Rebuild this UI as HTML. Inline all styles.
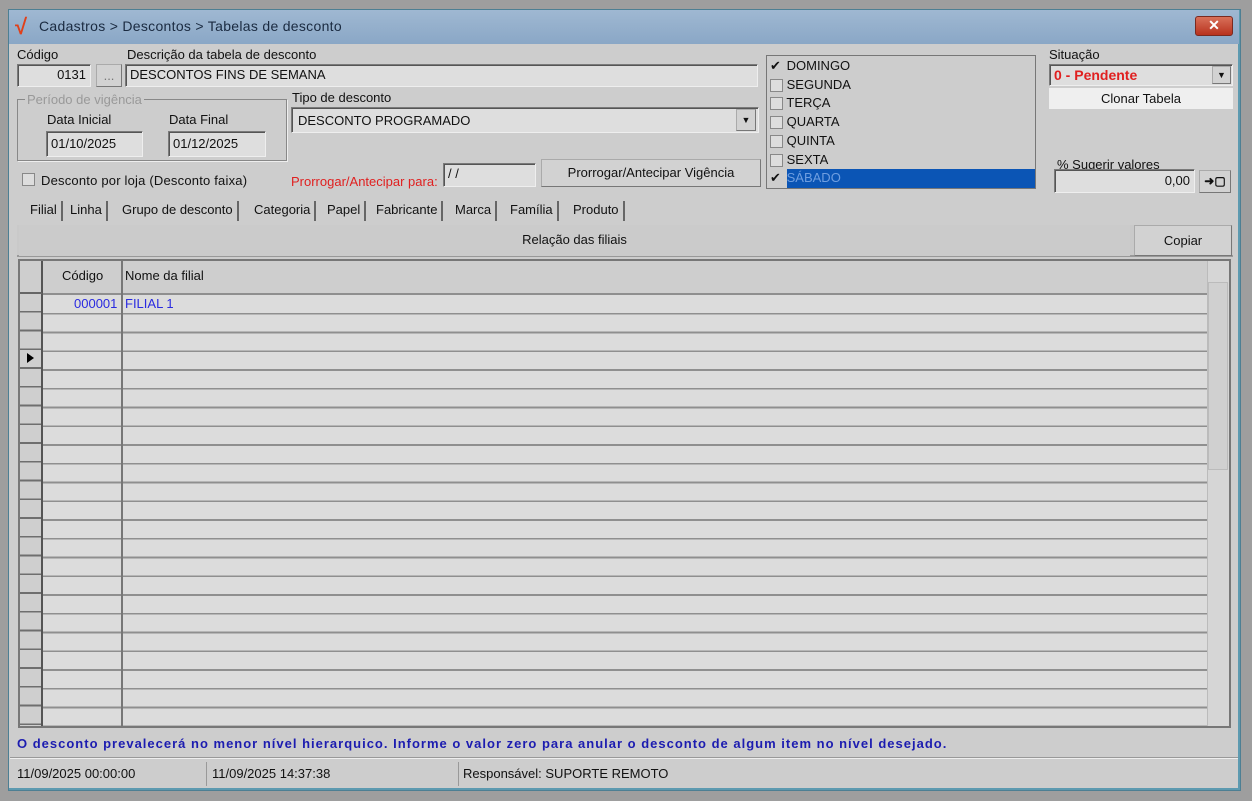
<!DOCTYPE html>
<html><head><meta charset="utf-8"><style>
*{box-sizing:border-box;margin:0;padding:0}
body{width:1252px;height:801px;background:#9e9e9e;font-family:"Liberation Sans",sans-serif;font-size:13px;color:#111;position:relative;overflow:hidden}
.a{position:absolute}
.win{left:8px;top:9px;width:1233px;height:782px;background:#cdcdcd;border:1px solid #4d7f93;box-shadow:inset -2px -2px 0 #5d9ab0}
.title{left:9px;top:10px;width:1230px;height:34px;background:linear-gradient(#9fb8d2,#8aa7c6);color:#1a2a40;font-size:14px}
.inp{background:#dedede;border:1px solid #7a7a7a;border-right-color:#eee;border-bottom-color:#eee;box-shadow:inset 1px 1px 0 #555;font-size:13px;padding:2px 4px;white-space:nowrap}
.lbl{font-size:13px;white-space:nowrap}
.btn{background:#d2d2d2;border:1px solid #aaa;border-right-color:#777;border-bottom-color:#777;text-align:center;font-size:13px}
.cb{width:13px;height:13px;border:1px solid #888;background:#ddd}
.tab{font-size:13px;top:201px;padding:0 4px;border-right:2px solid #666;height:20px;line-height:18px}
</style></head><body>
<div class="a win"></div>
<div class="a title">
  <span class="a" style="left:6px;top:4px;color:#e0401a;font-size:22px;font-weight:bold">√</span>
  <span class="a" style="left:30px;top:8px;letter-spacing:0.3px">Cadastros &gt; Descontos &gt; Tabelas de desconto</span>
  <div class="a" style="left:1186px;top:6px;width:38px;height:20px;background:linear-gradient(#d8705a,#b8321e);border:1px solid #7a2a20;border-radius:3px;color:#fff;text-align:center;font-weight:bold;line-height:17px">✕</div>
</div>

<div class="a lbl" style="left:17px;top:47px">Código</div>
<div class="a inp" style="left:17px;top:64px;width:74px;height:23px;text-align:right">0131</div>
<div class="a btn" style="left:96px;top:64px;width:26px;height:23px;color:#777;line-height:22px">...</div>
<div class="a lbl" style="left:127px;top:47px">Descrição da tabela de desconto</div>
<div class="a inp" style="left:125px;top:64px;width:633px;height:23px">DESCONTOS FINS DE SEMANA</div>

<div class="a" style="left:17px;top:99px;width:270px;height:62px;border:1px solid #888;box-shadow:1px 1px 0 #eee"></div>
<div class="a lbl" style="left:25px;top:92px;color:#999;background:#cdcdcd;padding:0 2px">Período de vigência</div>
<div class="a lbl" style="left:47px;top:112px">Data Inicial</div>
<div class="a inp" style="left:46px;top:131px;width:97px;height:26px;padding-top:4px">01/10/2025</div>
<div class="a lbl" style="left:169px;top:112px">Data Final</div>
<div class="a inp" style="left:168px;top:131px;width:98px;height:26px;padding-top:4px">01/12/2025</div>

<div class="a lbl" style="left:292px;top:90px">Tipo de desconto</div>
<div class="a inp" style="left:291px;top:107px;width:468px;height:26px;padding-top:5px;padding-left:6px">DESCONTO PROGRAMADO</div>
<div class="a btn" style="left:736px;top:109px;width:20px;height:22px;font-size:9px;line-height:20px">▼</div>

<div class="a cb" style="left:22px;top:173px"></div>
<div class="a lbl" style="left:41px;top:173px;letter-spacing:0.2px">Desconto por loja (Desconto faixa)</div>
<div class="a lbl" style="left:291px;top:174px;color:#e02020">Prorrogar/Antecipar para:</div>
<div class="a inp" style="left:443px;top:163px;width:93px;height:24px">/ /</div>
<div class="a btn" style="left:541px;top:159px;width:220px;height:28px;line-height:26px">Prorrogar/Antecipar Vigência</div>

<div class="a" style="left:766px;top:55px;width:270px;height:134px;border:1px solid #777;background:#cdcdcd"></div>
<div class="a" style="left:787px;top:169px;width:248px;height:19px;background:#0b55b5"></div>
<div class="a" style="left:770px;top:57px;line-height:18.7px;font-size:13px">
<div><span style="display:inline-block;width:13px">✔</span> DOMINGO</div>
<div><span class="cb" style="display:inline-block;vertical-align:middle"></span> SEGUNDA</div>
<div><span class="cb" style="display:inline-block;vertical-align:middle"></span> TERÇA</div>
<div><span class="cb" style="display:inline-block;vertical-align:middle"></span> QUARTA</div>
<div><span class="cb" style="display:inline-block;vertical-align:middle"></span> QUINTA</div>
<div><span class="cb" style="display:inline-block;vertical-align:middle"></span> SEXTA</div>
<div><span style="display:inline-block;width:13px">✔</span> <span style="color:#6f9ee0">SÁBADO</span></div>
</div>

<div class="a lbl" style="left:1049px;top:47px">Situação</div>
<div class="a inp" style="left:1049px;top:64px;width:184px;height:22px;color:#e02020;font-weight:bold;font-size:14px;padding-top:2px">0 - Pendente</div>
<div class="a btn" style="left:1212px;top:66px;width:19px;height:18px;font-size:9px;line-height:17px">▼</div>
<div class="a" style="left:1049px;top:88px;width:184px;height:21px;background:#efefef;text-align:center;line-height:21px">Clonar Tabela</div>
<div class="a lbl" style="left:1057px;top:157px">% Sugerir valores</div>
<div class="a inp" style="left:1054px;top:169px;width:141px;height:24px;text-align:right;padding-top:3px">0,00</div>
<div class="a btn" style="left:1199px;top:170px;width:32px;height:23px;font-size:12px;line-height:21px;font-weight:bold">➜▢</div>

<div class="a tab" style="left:26px">Filial</div>
<div class="a tab" style="left:66px">Linha</div>
<div class="a tab" style="left:118px">Grupo de desconto</div>
<div class="a tab" style="left:250px">Categoria</div>
<div class="a tab" style="left:323px">Papel</div>
<div class="a tab" style="left:372px">Fabricante</div>
<div class="a tab" style="left:451px">Marca</div>
<div class="a tab" style="left:506px">Família</div>
<div class="a tab" style="left:569px">Produto</div>

<div class="a" style="left:17px;top:225px;width:1216px;height:32px;background:#c9c9c9;border-bottom:2px solid #999"></div>
<div class="a btn" style="left:19px;top:225px;width:1111px;height:31px;line-height:30px;border:none;background:#cbcbcb">Relação das filiais</div>
<div class="a btn" style="left:1134px;top:225px;width:98px;height:31px;line-height:30px">Copiar</div>

<div class="a" style="left:18px;top:259px;width:1213px;height:469px;border:2px solid #777;background:repeating-linear-gradient(to bottom,#dcdcdc 0 16.8px,#8f8f8f 16.8px 18.75px);background-position:0 35px"></div>
<div class="a" style="left:20px;top:261px;width:1187px;height:34px;background:#cecece;border-bottom:2px solid #8f8f8f"></div>
<div class="a" style="left:20px;top:261px;width:23px;height:465px;background:repeating-linear-gradient(to bottom,#cfcfcf 0 16.8px,#6f6f6f 16.8px 18.75px);background-position:0 33px;border-right:2px solid #555"></div>
<div class="a" style="left:20px;top:261px;width:23px;height:33px;background:#cecece;border-right:2px solid #555;border-bottom:2px solid #666"></div>
<div class="a" style="left:121px;top:261px;width:2px;height:465px;background:#777"></div>
<div class="a lbl" style="left:62px;top:268px">Código</div>
<div class="a lbl" style="left:125px;top:268px">Nome da filial</div>
<div class="a lbl" style="left:74px;top:296px;color:#2a2ae0">000001</div>
<div class="a lbl" style="left:125px;top:296px;color:#2a2ae0">FILIAL 1</div>
<div class="a" style="left:27px;top:353px;width:0;height:0;border-left:7px solid #000;border-top:5px solid transparent;border-bottom:5px solid transparent"></div>
<div class="a" style="left:1207px;top:261px;width:22px;height:465px;background:#d6d6d6;border-left:1px solid #bbb"></div>
<div class="a" style="left:1208px;top:282px;width:20px;height:188px;background:#d0d0d0;border:1px solid #bbb"></div>

<div class="a" style="left:17px;top:736px;font-size:13px;font-weight:bold;color:#1c1cb0;white-space:nowrap;letter-spacing:1px">O desconto prevalecerá no menor nível hierarquico. Informe o valor zero para anular o desconto de algum item no nível desejado.</div>
<div class="a" style="left:10px;top:757px;width:1228px;height:2px;background:#999;border-bottom:1px solid #eee"></div>
<div class="a lbl" style="left:17px;top:766px">11/09/2025 00:00:00</div>
<div class="a" style="left:206px;top:762px;width:1px;height:24px;background:#999"></div>
<div class="a lbl" style="left:212px;top:766px">11/09/2025 14:37:38</div>
<div class="a" style="left:458px;top:762px;width:1px;height:24px;background:#999"></div>
<div class="a lbl" style="left:463px;top:766px">Responsável: SUPORTE REMOTO</div>
</body></html>
